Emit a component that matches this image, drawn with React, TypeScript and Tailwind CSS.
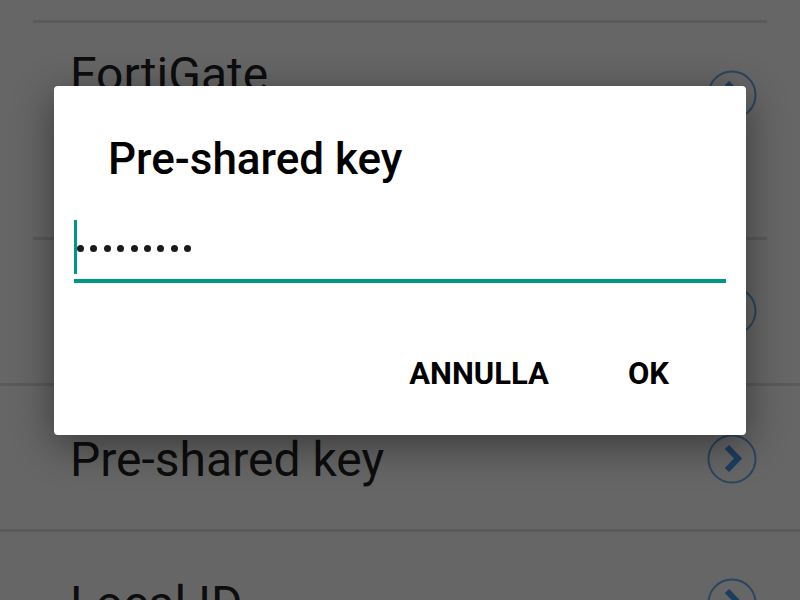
const rowIcon = (
  <svg width="50" height="50" viewBox="0 0 50 50" fill="none">
    <circle cx="25" cy="25" r="23.5" stroke="#2c4560" strokeWidth="2" />
    <polyline
      points="20,13 31,24.5 20,36"
      stroke="#1d3d5e"
      strokeWidth="6"
      strokeLinejoin="miter"
    />
  </svg>
);

const Dialog = () => {
  return (
    <div className="absolute left-[54px] top-[86px] w-[692px] h-[349px] bg-white rounded-[4px] shadow-[0_10px_40px_rgba(0,0,0,0.45)] pt-[51px]">
      {/* Title */}
      <h2 className="pl-[54px] text-[44px] leading-none font-medium text-black">
        Pre-shared key
      </h2>

      {/* Password field */}
      <div className="mt-[39px] px-[20px]">
        <div className="flex items-center">
          <div className="w-[3px] h-[54px] bg-[#009688]" />
          <div className="flex items-center gap-[6.4px] mt-[3px]">
            {Array.from({ length: 9 }).map((_, i) => (
              <span key={i} className="w-[7px] h-[7px] rounded-full bg-[#1a1a1a]" />
            ))}
          </div>
        </div>
        <div className="mt-[5px] h-[4px] bg-[#009688]" />
      </div>

      {/* Actions */}
      <div className="mt-[75px] flex justify-end gap-[79px] pr-[77px]">
        <button className="text-[31px] leading-none font-bold text-black">ANNULLA</button>
        <button className="text-[31px] leading-none font-bold text-black">OK</button>
      </div>
    </div>
  );
};

export default function App() {
  return (
    <div className="relative w-[800px] h-[600px] overflow-hidden bg-[#666666] font-['Roboto',sans-serif] text-[#0d0d0d]">
      <div className="pt-[20px]">
        <div className="mx-[33px] h-[3px] bg-[#5a5a5a]" />

        {/* FortiGate */}
        <div className="h-[214px] flex justify-between pl-[70px] pr-[43px]">
          <div className="pt-[28px] text-[48px] leading-none">FortiGate</div>
          <div className="mt-[47px]">{rowIcon}</div>
        </div>
        <div className="mx-[33px] h-[3px] bg-[#5a5a5a]" />

        {/* Hidden row */}
        <div className="h-[143px] flex justify-between pl-[70px] pr-[43px]">
          <div className="pt-[29px] text-[48px] leading-none">Gateway remoto</div>
          <div className="mt-[46px]">{rowIcon}</div>
        </div>
        <div className="h-[3px] bg-[#5a5a5a]" />

        {/* Pre-shared key */}
        <div className="h-[143px] flex justify-between pl-[70px] pr-[43px]">
          <div className="pt-[50px] text-[48px] leading-none">Pre-shared key</div>
          <div className="mt-[48px]">{rowIcon}</div>
        </div>
        <div className="h-[3px] bg-[#5a5a5a]" />

        {/* Local ID */}
        <div className="h-[143px] flex justify-between pl-[70px] pr-[43px]">
          <div className="pt-[48px] text-[48px] leading-none">Local ID</div>
          <div className="mt-[46px]">{rowIcon}</div>
        </div>
      </div>

      <Dialog />
    </div>
  );
}
